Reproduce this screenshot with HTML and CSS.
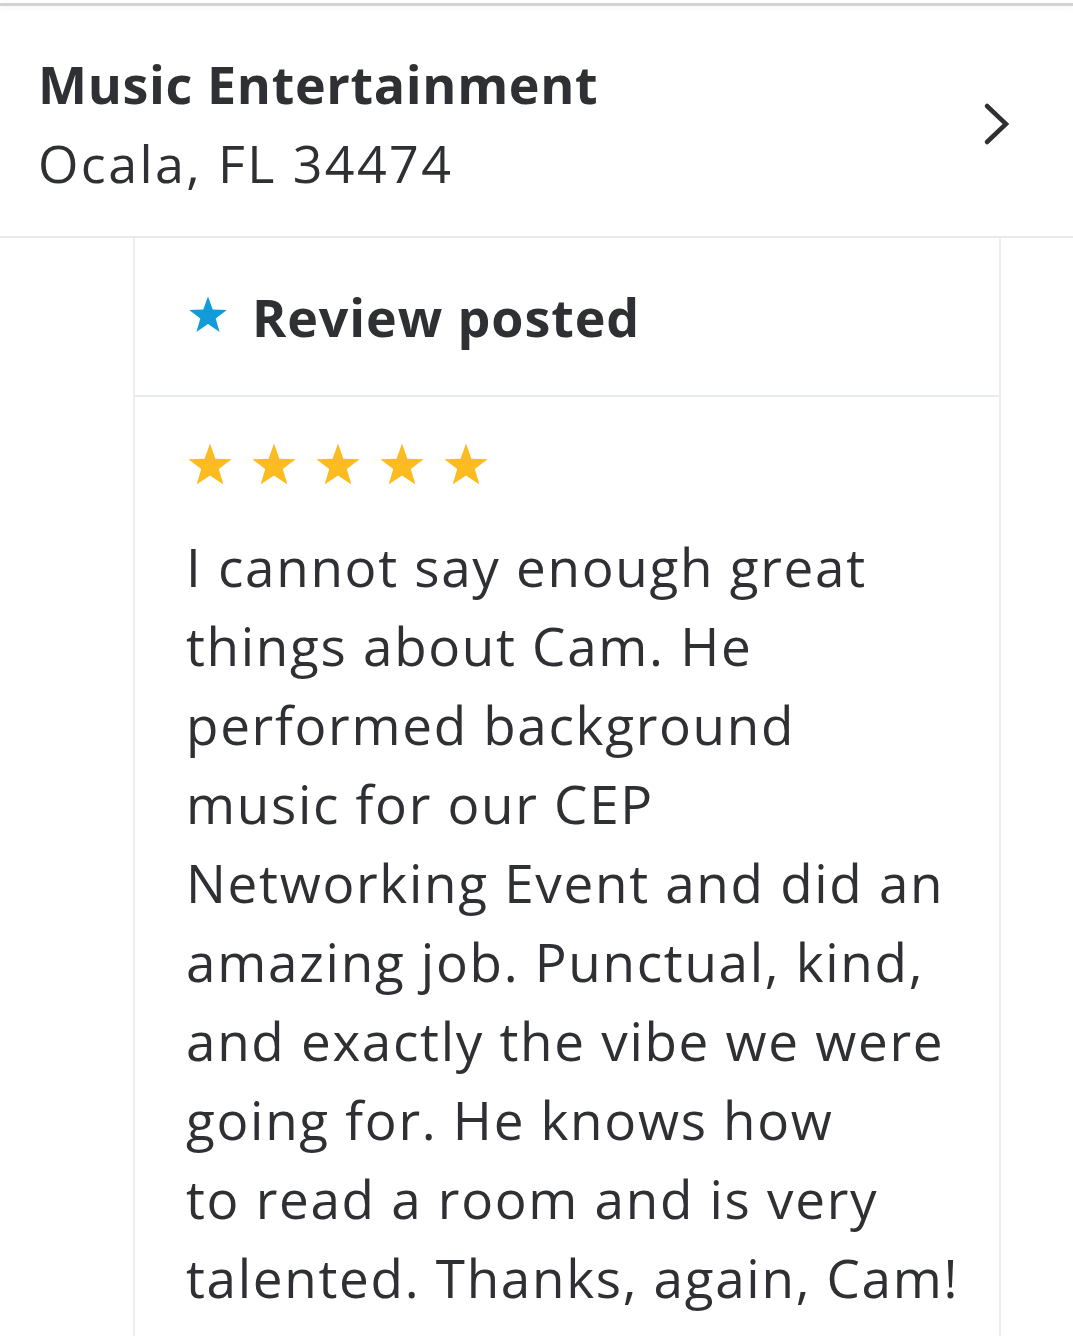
FILE: index.html
```html
<!DOCTYPE html>
<html>
<head>
<meta charset="utf-8">
<link rel="stylesheet" href="styles.css">
</head>
<body>
<div class="topbar"></div>
<header class="biz">
  <div class="biz-text">
    <div class="biz-name">Music Entertainment</div>
    <div class="biz-loc">Ocala, FL 34474</div>
  </div>
  <svg class="chev" width="28" height="44" viewBox="0 0 28 44"><path d="M4 4 L23 22 L4 40" fill="none" stroke="#2f3033" stroke-width="4.5" stroke-linecap="round" stroke-linejoin="miter"/></svg>
</header>
<main class="card">
  <div class="card-head">
    <svg class="bluestar" width="42" height="40" viewBox="0 0 24 23"><path d="M12 0.8 L14.7 8.4 L22.8 8.6 L16.4 13.5 L18.7 21.3 L12 16.7 L5.3 21.3 L7.6 13.5 L1.2 8.6 L9.3 8.4 Z" fill="#119bd8"/></svg>
    <span class="card-title">Review posted</span>
  </div>
  <div class="card-body">
    <div class="stars">
      <svg width="48" height="46" viewBox="0 0 24 23"><path d="M12 0.8 L14.7 8.4 L22.8 8.6 L16.4 13.5 L18.7 21.3 L12 16.7 L5.3 21.3 L7.6 13.5 L1.2 8.6 L9.3 8.4 Z" fill="#fcbb1f"/></svg>
      <svg width="48" height="46" viewBox="0 0 24 23"><path d="M12 0.8 L14.7 8.4 L22.8 8.6 L16.4 13.5 L18.7 21.3 L12 16.7 L5.3 21.3 L7.6 13.5 L1.2 8.6 L9.3 8.4 Z" fill="#fcbb1f"/></svg>
      <svg width="48" height="46" viewBox="0 0 24 23"><path d="M12 0.8 L14.7 8.4 L22.8 8.6 L16.4 13.5 L18.7 21.3 L12 16.7 L5.3 21.3 L7.6 13.5 L1.2 8.6 L9.3 8.4 Z" fill="#fcbb1f"/></svg>
      <svg width="48" height="46" viewBox="0 0 24 23"><path d="M12 0.8 L14.7 8.4 L22.8 8.6 L16.4 13.5 L18.7 21.3 L12 16.7 L5.3 21.3 L7.6 13.5 L1.2 8.6 L9.3 8.4 Z" fill="#fcbb1f"/></svg>
      <svg width="48" height="46" viewBox="0 0 24 23"><path d="M12 0.8 L14.7 8.4 L22.8 8.6 L16.4 13.5 L18.7 21.3 L12 16.7 L5.3 21.3 L7.6 13.5 L1.2 8.6 L9.3 8.4 Z" fill="#fcbb1f"/></svg>
    </div>
    <p class="review">I cannot say enough great<br>things about Cam. He<br>performed background<br>music for our CEP<br>Networking Event and did an<br>amazing job. Punctual, kind,<br>and exactly the vibe we were<br>going for. He knows how<br>to read a room and is very<br>talented. Thanks, again, Cam!</p>
  </div>
</main>
</body>
</html>
```
FILE: styles.css
```css
html, body {
  margin: 0;
  padding: 0;
  background: #ffffff;
}
body {
  font-family: "Open Sans", Lato, sans-serif;
  color: #2f3033;
  width: 1073px;
  height: 1336px;
  overflow: hidden;
  display: flex;
  flex-direction: column;
}
.topbar {
  height: 3px;
  margin-top: 3px;
  background: #d2d2d2;
  box-shadow: 0 2px 6px rgba(0,0,0,0.06);
}
.biz {
  display: flex;
  align-items: center;
  justify-content: space-between;
  padding: 0 62px 0 38px;
  height: 230px;
  flex-shrink: 0;
  border-bottom: 2px solid #e9eaeb;
}
.biz-text {
  padding-top: 4px;
}
.biz-name {
  font-weight: 700;
  font-size: 52px;
  line-height: 79px;
  letter-spacing: 0.65px;
}
.biz-loc {
  font-size: 52px;
  line-height: 79px;
  letter-spacing: 2.4px;
}
.chev {
  display: block;
  margin-top: 6px;
}
.card {
  flex: 1;
  margin-left: 133px;
  width: 864px;
  border-left: 2px solid #eceeef;
  border-right: 2px solid #eceeef;
}
.card-head {
  height: 157px;
  display: flex;
  align-items: center;
  padding-left: 52px;
  border-bottom: 2px solid #e9eced;
}
.bluestar {
  display: block;
  margin-right: 23px;
  margin-top: -4px;
}
.card-title {
  font-weight: 700;
  font-size: 52px;
  line-height: 60px;
  letter-spacing: 0.9px;
}
.card-body {
  padding: 45px 20px 0 51px;
}
.stars {
  display: flex;
  gap: 16px;
}
.stars svg {
  display: block;
}
.review {
  margin: 39px 0 0;
  font-size: 53px;
  line-height: 79px;
  letter-spacing: 1.7px;
  white-space: nowrap;
}
```
